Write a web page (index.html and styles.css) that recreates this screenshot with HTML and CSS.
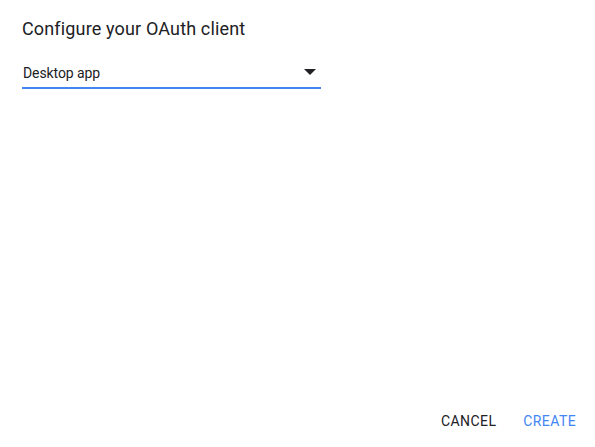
FILE: index.html
```html
<!DOCTYPE html>
<html>
<head>
<meta charset="utf-8">
<link rel="stylesheet" href="styles.css">
</head>
<body>
<div class="dialog">
  <h1 class="title">Configure your OAuth client</h1>
  <div class="select">
    <span class="value">Desktop app</span>
    <svg class="arrow" width="12" height="6" viewBox="0 0 12 6"><path d="M0 0h12L6 6z" fill="#202124"/></svg>
  </div>
  <div class="spacer"></div>
  <div class="actions">
    <button class="btn cancel">CANCEL</button>
    <button class="btn create">CREATE</button>
  </div>
</div>
</body>
</html>
```
FILE: styles.css
```css
html, body { margin: 0; padding: 0; background: #fff; }
body { font-family: Roboto, "Noto Sans", sans-serif; color: #202124; }
.dialog { width: 595px; height: 447px; display: flex; flex-direction: column; box-sizing: border-box; padding: 18px 0 0 22px; }
.title { margin: 0; font-size: 18px; font-weight: 400; line-height: 22px; letter-spacing: 0.15px; color: #202124; }
.select { margin-top: 21px; width: 299px; height: 28px; box-sizing: border-box; border-bottom: 2px solid #4285f4; display: flex; align-items: center; justify-content: space-between; padding: 0 5px 2px 1px; }
.value { font-size: 14px; line-height: 16px; letter-spacing: -0.1px; color: #202124; }
.arrow { display: block; margin-top: -2px; }
.spacer { flex: 1; }
.actions { display: flex; justify-content: flex-end; padding: 0 11px 14px 0; gap: 4px; }
.btn { background: none; border: none; font-family: Roboto, sans-serif; font-size: 14px; letter-spacing: 0.4px; padding: 0 8px; height: 24px; cursor: pointer; }
.cancel { color: #202124; }
.create { color: #4285f4; margin-left: 7px; }
```
